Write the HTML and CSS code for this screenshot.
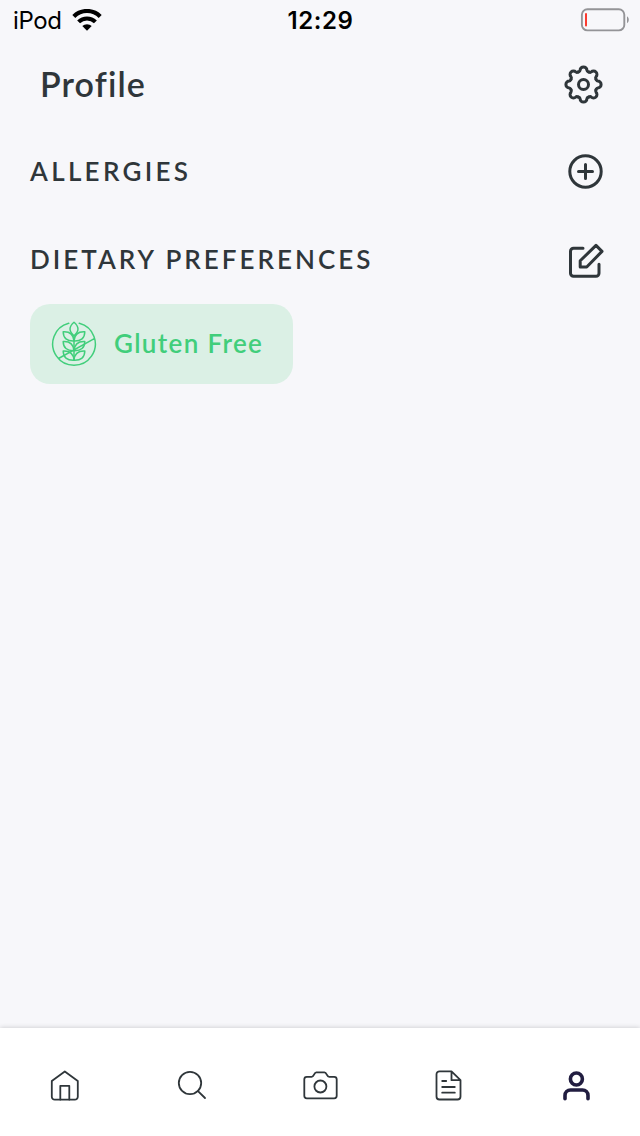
FILE: index.html
```html
<!DOCTYPE html>
<html lang="en">
<head>
    <meta charset="UTF-8">
    <meta name="viewport" content="width=device-width, initial-scale=1.0">
    <title>Profile</title>
    <link rel="stylesheet" href="styles.css">
</head>
<body>
    <div class="screen">
        <div class="status-bar">
            <div class="carrier">
                <span>iPod</span>
                <svg class="wifi" width="30" height="22" viewBox="0 0 30 22">
                    <path d="M1.8 7.4a18.8 18.8 0 0 1 26.4 0" stroke-width="4.2"/>
                    <path d="M6.6 12.9a12 12 0 0 1 16.8 0" stroke-width="4.1"/>
                    <path class="dot" d="M10.3 17.1a6.8 6.8 0 0 1 9.4 0L15 21.8z"/>
                </svg>
            </div>
            <span class="time">12:29</span>
            <svg class="battery" width="49" height="24" viewBox="0 0 49 24">
                <rect x="1.9" y="1.2" width="42.4" height="21.2" rx="5.5" fill="none" stroke="#949497" stroke-width="1.9"/>
                <rect x="5" y="5" width="2" height="13.5" rx="1" fill="#fb3b30"/>
                <path d="M47 8.3c2.4 1.4 2.4 5.6 0 7z" fill="#949497"/>
            </svg>
        </div>

        <header class="header">
            <h1>Profile</h1>
            <svg class="icon" width="40" height="40" viewBox="-19.5 -20.5 40 40">
                <defs>
                    <path id="tooth" d="M-5.2-12.5C-4.2-12.9-3.4-13.3-3.4-14.2a3.4 3.4 0 0 1 6.8 0C3.4-13.3 4.2-12.9 5.2-12.5"/>
                </defs>
                <use href="#tooth"/>
                <use href="#tooth" transform="rotate(45)"/>
                <use href="#tooth" transform="rotate(90)"/>
                <use href="#tooth" transform="rotate(135)"/>
                <use href="#tooth" transform="rotate(180)"/>
                <use href="#tooth" transform="rotate(225)"/>
                <use href="#tooth" transform="rotate(270)"/>
                <use href="#tooth" transform="rotate(315)"/>
                <circle r="5"/>
            </svg>
        </header>

        <main class="content">
            <div class="section-title">
                <h2 class="allergies">Allergies</h2>
                <svg class="icon" width="40" height="40" viewBox="0 0 40 40">
                    <circle cx="20.5" cy="19.5" r="15.7"/>
                    <path d="M20.5 12.5v14M13.5 19.5h14"/>
                </svg>
            </div>
            <div class="section-title">
                <h2 class="dietary">Dietary Preferences</h2>
                <svg class="icon" width="40" height="40" viewBox="0 0 40 40">
                    <path d="M18 8.2H8.5a3 3 0 0 0-3 3v22a3 3 0 0 0 3 3H31a3 3 0 0 0 3-3v-9"/>
                    <path d="M15.2 27v-6.2L31 5.4l6 6L21.7 27z"/>
                </svg>
            </div>
            <div class="tag">
                <svg class="wheat" width="48" height="48" viewBox="0 0 48 48">
                    <defs>
                        <path id="leaves" d="M24 21c-7 .3-10.8-3-10.8-9.2 5-.3 10.200 1.700 10.800 9.200zM24 21c7 .3 10.800-3 10.800-9.200-5-.3-10.200 1.700-10.800 9.200z"/>
                    </defs>
                    <path d="M18.700 3.300a21.300 21.300 0 1 0 10.600 0"/>
                    <path d="M8.500 38.500L44.300 18.700"/>
                    <path d="M24 2.200c-5.300 4.500-5.300 9 0 13.500 5.300-4.500 5.300-9 0-13.500zM24 15.700v24.600"/>
                    <use href="#leaves"/>
                    <use href="#leaves" y="9.700"/>
                    <use href="#leaves" y="19.300"/>
                </svg>
                <span>Gluten Free</span>
            </div>
        </main>

        <nav class="tab-bar">
            <a class="tab" href="#">
                <svg width="40" height="40" viewBox="0 0 40 40">
                    <path d="M7.8 15.9l13-9.4 13 9.4v15.800a3 3 0 0 1-3 3h-20a3 3 0 0 1-3-3z"/>
                    <path d="M16.300 34.500V20.800h9v13.700"/>
                </svg>
            </a>
            <a class="tab" href="#">
                <svg width="40" height="40" viewBox="0 0 40 40">
                    <circle cx="18" cy="18" r="11.200"/>
                    <path d="M26 26.200l7 6.800"/>
                </svg>
            </a>
            <a class="tab" href="#">
                <svg width="40" height="40" viewBox="0 0 40 40">
                    <path d="M6.800 11.800h4.800c2.600 0 2.200-4.500 4.700-4.500h8.200c2.500 0 2.100 4.500 4.700 4.500h5a2.500 2.500 0 0 1 2.500 2.500v16.500a2.500 2.500 0 0 1-2.500 2.500H6.800a2.500 2.500 0 0 1-2.500-2.500V14.300a2.500 2.500 0 0 1 2.500-2.500z"/>
                    <circle cx="20.400" cy="21.500" r="6"/>
                </svg>
            </a>
            <a class="tab" href="#">
                <svg width="40" height="40" viewBox="0 0 40 40">
                    <path d="M23.500 6.300h-12a3 3 0 0 0-3 3v22.200a3 3 0 0 0 3 3h18a3 3 0 0 0 3-3V15.200zM23.500 6.300v8.900h9"/>
                    <path d="M14.200 16h4M14.200 22h12.600M14.200 27.700h12.600"/>
                </svg>
            </a>
            <a class="tab active" href="#">
                <svg width="40" height="40" viewBox="0 0 40 40">
                    <circle cx="20.400" cy="14" r="6"/>
                    <path d="M9 33.800v-3.300a5.500 5.500 0 0 1 5.500-5.500h12a5.500 5.500 0 0 1 5.500 5.500v3.300"/>
                </svg>
            </a>
        </nav>
    </div>
</body>
</html>
```
FILE: styles.css
```css
body {
    margin: 0;
    background-color: #f7f7fa;
    color: #2f363a;
    font-family: Lato, sans-serif;
}

h1,
h2 {
    margin: 0;
}

svg {
    display: block;
    flex-shrink: 0;
}

.screen {
    display: flex;
    flex-direction: column;
    height: 1136px;
    overflow: hidden;
}

.status-bar {
    display: grid;
    grid-template-columns: 1fr auto 1fr;
    align-items: center;
    height: 40px;
    padding: 0 11px 0 13px;
    color: #000;
    font-family: Inter, sans-serif;
    font-size: 24px;
}

.carrier {
    display: flex;
    align-items: center;
    gap: 10px;
    letter-spacing: -0.4px;
}

.wifi {
    fill: none;
    stroke: #000;
}

.wifi .dot {
    fill: #000;
    stroke: none;
}

.time {
    padding-right: 1px;
    font-weight: 600;
    letter-spacing: 0.6px;
}

.battery {
    justify-self: end;
}

.header {
    display: flex;
    align-items: center;
    justify-content: space-between;
    height: 88px;
    padding: 0 36px 0 40px;
}

.header h1 {
    padding-bottom: 2px;
    font-size: 34px;
    font-weight: 600;
    letter-spacing: 1.1px;
}

.icon {
    fill: none;
    stroke: #2f363a;
    stroke-width: 3;
    stroke-linecap: round;
    stroke-linejoin: round;
}

.content {
    flex: 1;
    padding: 0 35px 0 30px;
}

.section-title {
    display: flex;
    align-items: center;
    justify-content: space-between;
    height: 88px;
}

.section-title h2 {
    padding-bottom: 2px;
    font-size: 26px;
    font-weight: 600;
    text-transform: uppercase;
}

.section-title .allergies {
    letter-spacing: 3.3px;
}

.section-title .dietary {
    letter-spacing: 3px;
}

.tag {
    display: flex;
    align-items: center;
    gap: 16px;
    box-sizing: border-box;
    width: 263px;
    height: 80px;
    padding-left: 20px;
    border-radius: 20px;
    background-color: #dbf0e5;
    color: #41ce7b;
    font-size: 26px;
    font-weight: 600;
    letter-spacing: 1.35px;
    white-space: nowrap;
}

.tag span {
    padding-bottom: 2px;
}

.wheat {
    fill: none;
    stroke: #41ce7b;
    stroke-width: 1.5;
    stroke-linecap: round;
    stroke-linejoin: round;
}

.tab-bar {
    display: flex;
    height: 108px;
    background-color: #fff;
    box-shadow: 0 0 5px rgba(0, 0, 0, 0.2);
}

.tab {
    display: flex;
    flex: 1;
    justify-content: center;
    padding-top: 37px;
}

.tab svg {
    fill: none;
    stroke: #2f363a;
    stroke-width: 1.8;
    stroke-linecap: round;
    stroke-linejoin: round;
}

.tab.active svg {
    stroke: #211d40;
    stroke-width: 3.6;
}
```
